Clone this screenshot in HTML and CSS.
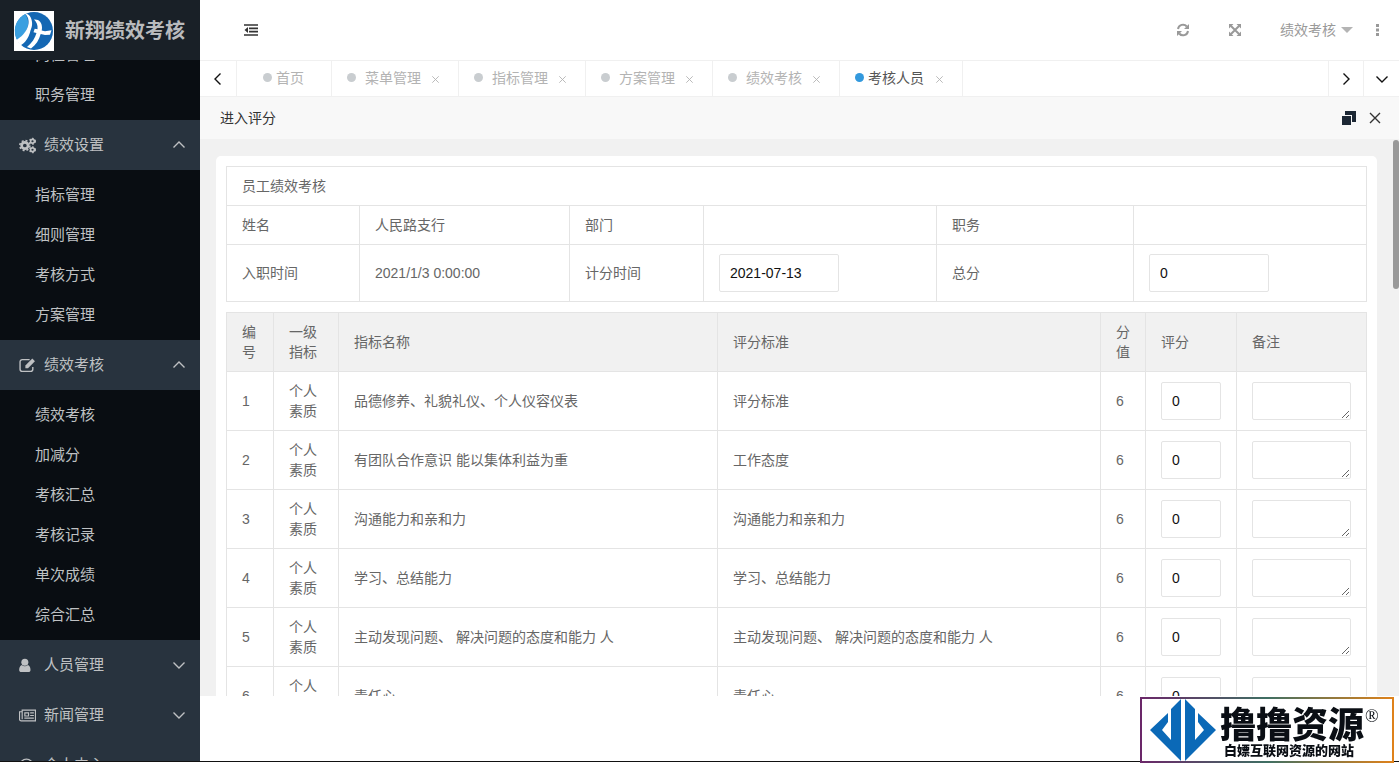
FILE: index.html
```html
<!DOCTYPE html>
<html lang="zh-CN">
<head>
<meta charset="utf-8">
<title>新翔绩效考核</title>
<link rel="stylesheet" href="styles.css">
</head>
<body>
<svg class="defs" aria-hidden="true">
  <symbol id="up" viewBox="0 0 14 14"><path d="M1.500 9.500 7 4l5.500 5.500"/></symbol>
  <symbol id="down" viewBox="0 0 14 14"><path d="M1.500 4.500 7 10l5.500-5.500"/></symbol>
  <symbol id="x" viewBox="0 0 14 14"><path d="M2 2l10 10M12 2 2 12"/></symbol>
</svg>
<div class="app">
  <aside class="side">
    <header class="brand">
      <svg class="logo" viewBox="0 0 40 40" role="img" aria-label="新翔">
        <rect width="40" height="40" fill="#fff"/>
        <circle cx="20" cy="20" r="19" fill="#1467b3"/>
        <path d="M11 3C4 7 0 14 1 22c.3 3 1 5 2 7 7-4 10-9 11-15 .5-4-.5-8-3-11z" fill="#3a9fe0"/>
        <path d="M11 2.500c4 4 4.500 9 2.500 14C11.500 22 7 26 2.500 29l4 5.500c5-3 8-8 9.500-13 1-4 2.500-6 2-10.500C17.500 6 15 3 11 2.500z" fill="#fff"/>
        <path d="M20 8.500c5-.5 8 3 8 8 0 1-.1 2-.3 3l3.300.7 6.500-1-1.500 4.500-5 .3-4.300-1C25 29 22 34 17 37.500l-4-1.500c5-4 8-9 9.500-14l-3-.8 1.200-3.500 2.800.5c.5-4-1-7.200-3.500-9.700z" fill="#fff"/>
      </svg>
      <h1>新翔绩效考核</h1>
    </header>
    <nav class="menu">
      <ul class="sub"><li><a href="#">岗位管理</a></li><li><a href="#">职务管理</a></li></ul>
      <button class="group"><svg class="gi" viewBox="0 0 16 16"><g fill="none" stroke="currentColor"><circle cx="5.500" cy="8" r="3" stroke-width="2.500"/><circle cx="5.500" cy="8" r="4.700" stroke-width="1.500" stroke-dasharray="1.900 1.800"/><circle cx="12.700" cy="4" r="1.800" stroke-width="1.500"/><circle cx="12.700" cy="4" r="2.600" stroke-dasharray="1.400 1.500"/><circle cx="12.700" cy="12" r="1.800" stroke-width="1.500"/><circle cx="12.700" cy="12" r="2.600" stroke-dasharray="1.400 1.500"/></g></svg><span>绩效设置</span><svg class="arrow"><use href="#up"/></svg></button>
      <ul class="sub"><li><a href="#">指标管理</a></li><li><a href="#">细则管理</a></li><li><a href="#">考核方式</a></li><li><a href="#">方案管理</a></li></ul>
      <button class="group"><svg class="gi" viewBox="0 0 16 16"><path d="M10 2.500H3A2 2 0 0 0 1 4.500v7a2 2 0 0 0 2 2h8a2 2 0 0 0 2-2V9.500" fill="none" stroke="currentColor" stroke-width="1.300"/><path d="M12.500 1.500 15 4l-6.500 6.500H6V8z" fill="currentColor"/></svg><span>绩效考核</span><svg class="arrow"><use href="#up"/></svg></button>
      <ul class="sub"><li><a href="#">绩效考核</a></li><li><a href="#">加减分</a></li><li><a href="#">考核汇总</a></li><li><a href="#">考核记录</a></li><li><a href="#">单次成绩</a></li><li><a href="#">综合汇总</a></li></ul>
      <button class="group"><svg class="gi" viewBox="0 0 16 16"><g fill="currentColor"><circle cx="5.500" cy="5" r="3.300"/><path d="M2.500 7.500C0.500 8.500 0 11 .2 12.500c0 1 .8 1.700 1.800 1.700h7c1 0 1.800-.7 1.800-1.700C11 11 10.500 8.500 8.500 7.500c-2 1.700-4 1.700-6 0z"/></g></svg><span>人员管理</span><svg class="arrow"><use href="#down"/></svg></button>
      <button class="group"><svg class="gi" viewBox="0 0 16 16"><path d="M3 3h12.500v10H2A1.500 1.500 0 0 1 .5 11.500V4.500H3zM3 3v8.500M5.500 5.500h3.500v3H5.500zM10.500 5.500H14M10.500 8H14M5 10.500h9" fill="none" stroke="currentColor" stroke-width="1.100"/></svg><span>新闻管理</span><svg class="arrow"><use href="#down"/></svg></button>
      <button class="group"><svg class="gi" viewBox="0 0 16 16"><circle cx="7" cy="8" r="6" fill="none" stroke="currentColor" stroke-width="1.300"/><circle cx="7" cy="8" r="2" fill="currentColor"/></svg><span>个人中心</span><svg class="arrow"><use href="#down"/></svg></button>
    </nav>
  </aside>
  <main class="main">
    <header class="top">
      <button class="fold" aria-label="收起菜单"><svg viewBox="0 0 14 12"><path d="M0 1h14M5 4.300h9M5 7.600h9M0 11h14" stroke="currentColor" stroke-width="1.700"/><path d="M4 3v6L.5 6z" fill="currentColor"/></svg></button>
      <div class="tools">
        <button aria-label="刷新"><svg viewBox="0 0 14 14"><path d="M2 6a5 5 0 0 1 8.800-2.500M12 8a5 5 0 0 1-8.800 2.500" fill="none" stroke="currentColor" stroke-width="2"/><path d="M13 1v5H8zM1 13V8h5z" fill="currentColor"/></svg></button>
        <button aria-label="全屏"><svg viewBox="0 0 14 14"><path d="M1 1h4.500L1 5.500zM13 1v4.500L8.500 1zM1 13V8.500L5.500 13zM13 13H8.500L13 8.500z" fill="currentColor"/><path d="M3 3l8 8M11 3l-8 8" stroke="currentColor" stroke-width="2"/></svg></button>
        <button class="user">绩效考核<i></i></button>
        <button aria-label="更多" class="more"><svg viewBox="0 0 4 12"><path d="M0 0h3v3H0zM0 4.500h3v3H0zM0 9h3v3H0z" fill="currentColor"/></svg></button>
      </div>
    </header>
    <div class="tabs">
      <button class="nav" aria-label="向左"><svg class="left"><use href="#down"/></svg></button>
      <div class="tab home"><i></i><a href="#">首页</a></div>
      <div class="tab"><i></i><a href="#">菜单管理</a><button aria-label="关闭"><svg><use href="#x"/></svg></button></div>
      <div class="tab"><i></i><a href="#">指标管理</a><button aria-label="关闭"><svg><use href="#x"/></svg></button></div>
      <div class="tab"><i></i><a href="#">方案管理</a><button aria-label="关闭"><svg><use href="#x"/></svg></button></div>
      <div class="tab"><i></i><a href="#">绩效考核</a><button aria-label="关闭"><svg><use href="#x"/></svg></button></div>
      <div class="tab on"><i></i><a href="#">考核人员</a><button aria-label="关闭"><svg><use href="#x"/></svg></button></div>
      <button class="nav right-nav" aria-label="向右"><svg class="right"><use href="#down"/></svg></button>
      <button class="nav" aria-label="展开"><svg><use href="#down"/></svg></button>
    </div>
    <div class="title"><h2>进入评分</h2>
      <button aria-label="还原"><svg viewBox="0 0 14 14"><path d="M3 0h11v11h-4V4H3z" fill="#1c2734"/><path d="M0 5h9v9H0z" fill="#1c2734"/></svg></button>
      <button aria-label="关闭"><svg><use href="#x"/></svg></button>
    </div>
    <section class="view">
      <div class="card">
        <table class="info">
          <colgroup><col class="a"><col class="b"><col class="a2"><col class="c"><col class="d"><col></colgroup>
          <tr><td colspan="6">员工绩效考核</td></tr>
          <tr><td>姓名</td><td>人民路支行</td><td>部门</td><td></td><td>职务</td><td></td></tr>
          <tr><td>入职时间</td><td>2021/1/3 0:00:00</td><td><label for="date">计分时间</label></td><td><input id="date" value="2021-07-13"></td><td><label for="total">总分</label></td><td><input id="total" value="0"></td></tr>
        </table>
        <table class="score">
          <colgroup><col class="no"><col class="lv"><col class="name"><col><col class="val"><col class="sc"><col class="note"></colgroup>
          <thead><tr><th>编号</th><th>一级指标</th><th>指标名称</th><th>评分标准</th><th>分值</th><th>评分</th><th>备注</th></tr></thead>
          <tbody>
          <tr><td>1</td><td>个人素质</td><td>品德修养、礼貌礼仪、个人仪容仪表</td><td>评分标准</td><td>6</td><td><input aria-label="评分" value="0"></td><td><textarea aria-label="备注"></textarea></td></tr>
          <tr><td>2</td><td>个人素质</td><td>有团队合作意识 能以集体利益为重</td><td>工作态度</td><td>6</td><td><input aria-label="评分" value="0"></td><td><textarea aria-label="备注"></textarea></td></tr>
          <tr><td>3</td><td>个人素质</td><td>沟通能力和亲和力</td><td>沟通能力和亲和力</td><td>6</td><td><input aria-label="评分" value="0"></td><td><textarea aria-label="备注"></textarea></td></tr>
          <tr><td>4</td><td>个人素质</td><td>学习、总结能力</td><td>学习、总结能力</td><td>6</td><td><input aria-label="评分" value="0"></td><td><textarea aria-label="备注"></textarea></td></tr>
          <tr><td>5</td><td>个人素质</td><td>主动发现问题、 解决问题的态度和能力 人</td><td>主动发现问题、 解决问题的态度和能力 人</td><td>6</td><td><input aria-label="评分" value="0"></td><td><textarea aria-label="备注"></textarea></td></tr>
          <tr><td>6</td><td>个人素质</td><td>责任心</td><td>责任心</td><td>6</td><td><input aria-label="评分" value="0"></td><td><textarea aria-label="备注"></textarea></td></tr>
          </tbody>
        </table>
      </div>
      <div class="thumb"></div>
    </section>
  </main>
</div>
<div class="mark">
  <svg viewBox="0 0 66 62" aria-hidden="true"><g fill="#0b69b7"><path d="M31 0v62L0 31 18 14v9l-6 8 9 10V10z"/><path d="M35 0v62L66 31 48 14v9l6 8-9 10V10z"/></g></svg>
  <div class="words"><strong>撸撸资源</strong><span>白嫖互联网资源的网站</span></div>
  <sup>®</sup>
</div>
</body>
</html>
```
FILE: styles.css
```css
* { box-sizing: border-box; }
body {
  margin: 0;
  height: 100vh;
  overflow: hidden;
  display: flex;
  flex-direction: column;
  padding-bottom: 1px;
  background: #fff;
  color: #666;
  font: 14px/20px "Liberation Sans", "Noto Sans CJK SC", sans-serif;
}
button { border: 0; padding: 0; background: none; font: inherit; color: inherit; display: flex; align-items: center; justify-content: center; }
a { color: inherit; text-decoration: none; }
ul { list-style: none; margin: 0; padding: 0; }
h1, h2 { margin: 0; }
svg { fill: none; stroke-width: 1.400; width: 14px; height: 14px; flex: none; }
symbol { stroke: currentColor; overflow: visible; }
.defs { display: none; }
.app { flex: 1; min-height: 0; display: flex; border-bottom: 1px solid #111; }

.side { width: 200px; flex: none; display: flex; flex-direction: column; background: #28333e; color: #bfc1c3; font-size: 15px; overflow: hidden; }
.brand { height: 60px; flex: none; display: flex; align-items: center; gap: 11px; padding: 2px 0 0 14px; background: #192027; position: relative; z-index: 1; }
.brand h1 { font-size: 20px; line-height: 30px; color: #b9bbbd; white-space: nowrap; }
.logo { width: 40px; height: 40px; }
.menu { margin-top: -30px; }
.sub { padding: 5px 0; background: #090d12; }
.sub a { display: block; line-height: 40px; padding-left: 35px; }
.group { width: 100%; height: 50px; padding: 0 14px 0 19px; gap: 8px; justify-content: flex-start; }
.group span { flex: 1; text-align: left; }
.gi { width: 17px; height: 17px; }

.main { flex: 1; min-width: 0; display: flex; flex-direction: column; }
.top { height: 60px; flex: none; display: flex; align-items: center; justify-content: space-between; padding: 0 19px 0 44px; }
.fold { color: #333; }
.fold svg { height: 12px; }
.tools { display: flex; align-items: center; color: #999; gap: 38px; }
.user { gap: 5px; }
.user i { border: 6px solid transparent; border-top-color: #b4b4b4; border-bottom: 0; }
.more { margin-left: -15px; }
.more svg { width: 4px; height: 12px; }
.tabs { height: 37px; flex: none; display: flex; border: 1px solid #f0f0f0; border-width: 1px 0; }
.nav { width: 37px; border-right: 1px solid #f0f0f0; color: #111; }
.nav:last-child { border: 0; width: 35px; }
.right-nav { margin-left: auto; width: 36px; border-left: 1px solid #f0f0f0; }
.left { transform: rotate(90deg); }
.right { transform: rotate(-90deg); }
.tab { display: flex; align-items: center; gap: 9px; padding: 0 18px 2px 15px; border-right: 1px solid #f0f0f0; color: #b3b3b3; }
.tab i { width: 9px; height: 9px; border-radius: 50%; background: #c9cdd0; }
.tab svg { width: 9px; height: 9px; margin: 3px 0 0 1px; }
.tab.home { gap: 4px; padding: 0 27px 2px 26px; }
.tab.on { color: #555; gap: 4px; }
.on i { background: #3399dd; }
.on svg { margin-left: 7px; color: #b3b3b3; }
.title { height: 42px; flex: none; display: flex; align-items: center; gap: 12px; padding: 0 17px 0 20px; background: #f8f8f8; color: #333; }
.title h2 { flex: 1; font-size: 14px; font-weight: 400; }
.view { flex: 1; min-height: 0; overflow: hidden; margin-bottom: 65px; padding: 17px 22px 0 16px; background: #f1f1f1; position: relative; }
.thumb { position: absolute; top: 1px; right: 0; width: 6px; height: 149px; border-radius: 3px; background: #999; }
.card { background: #fff; border-radius: 5px; padding: 10px; }
table { width: 100%; table-layout: fixed; border-collapse: collapse; }
td, th { border: 1px solid #e4e4e4; padding: 9px 15px; font-weight: 400; text-align: left; height: 39px; }
.a { width: 133px; }
.a2 { width: 134px; }
.b { width: 210px; }
.c { width: 233px; }
.d { width: 197px; }
.score { margin-top: 10px; }
.score th { background: #f1f1f1; }
.no { width: 47px; }
.lv { width: 65px; }
.name { width: 379px; }
.val { width: 45px; }
.sc { width: 91px; }
.note { width: 130px; }
input, textarea { display: block; height: 38px; border: 1px solid #e4e4e4; border-radius: 2px; padding: 0 10px; font: inherit; color: #111; background: #fff; }
.info input { width: 120px; }
.score input, textarea { width: 100%; }

.mark { position: fixed; right: 5px; bottom: 0; width: 254px; height: 66px; display: flex; align-items: center; gap: 4px; padding-left: 8px; background: #fff; border: 2px solid; border-image: linear-gradient(90deg, #6b2769, #3f6f63 50%, #e0821a) 2; color: #0a0e14; }
.mark svg { width: 66px; height: 62px; }
.words { display: flex; flex-direction: column; font-family: "Noto Sans CJK SC", sans-serif; font-weight: 900; white-space: nowrap; }
.words strong { font-size: 36px; line-height: 40px; font-weight: 900; }
.words span { font-size: 13px; line-height: 16px; padding-left: 4px; }
.mark sup { align-self: flex-start; margin-left: -3px; font: 18px/34px "Liberation Serif", serif; }
```
